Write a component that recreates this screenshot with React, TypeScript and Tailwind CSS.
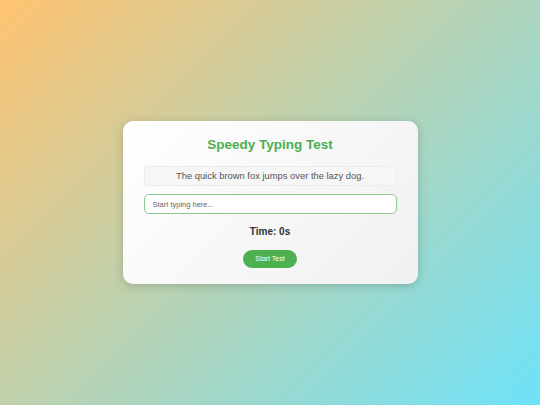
import React, { useState } from 'react';

export default function App() {
  const [text, setText] = useState('');

  return (
    <div className="flex h-[405px] w-full items-center justify-center bg-[linear-gradient(135deg,#ffc371_0%,#6ee2f8_100%)] font-['Liberation_Sans',Arial,sans-serif]">
      <div className="flex w-[295px] flex-col items-center rounded-[10px] bg-[linear-gradient(135deg,#ffffff_0%,#f0f0f0_100%)] px-[21px] pb-[16px] pt-[15px] shadow-[0_2px_10px_rgba(0,0,0,0.18)]">
        <h1 className="text-[13.5px] font-bold leading-[18px] text-[#4caf50]">Speedy Typing Test</h1>

        <div className="mt-[12px] flex h-[20px] w-full items-center justify-center rounded-[4px] border border-[#ececec] bg-[#f6f6f6] text-[9.4px] text-[#555]">
          The quick brown fox jumps over the lazy dog.
        </div>

        <input
          autoFocus
          value={text}
          onChange={(e) => setText(e.target.value)}
          placeholder="Start typing here..."
          className="mt-[8px] h-[20px] w-full rounded-[5px] border border-[#8bc98d] bg-white px-[8px] text-[7.5px] text-[#333] outline-none placeholder:text-[#666]"
        />

        <div className="mt-[11px] text-[10px] font-bold leading-[13px] text-[#333]">Time: 0s</div>

        <button className="mt-[12px] flex h-[18px] w-[54px] items-center justify-center rounded-full bg-[#4caf50] text-[7px] text-white">
          Start Test
        </button>
      </div>
    </div>
  );
}
